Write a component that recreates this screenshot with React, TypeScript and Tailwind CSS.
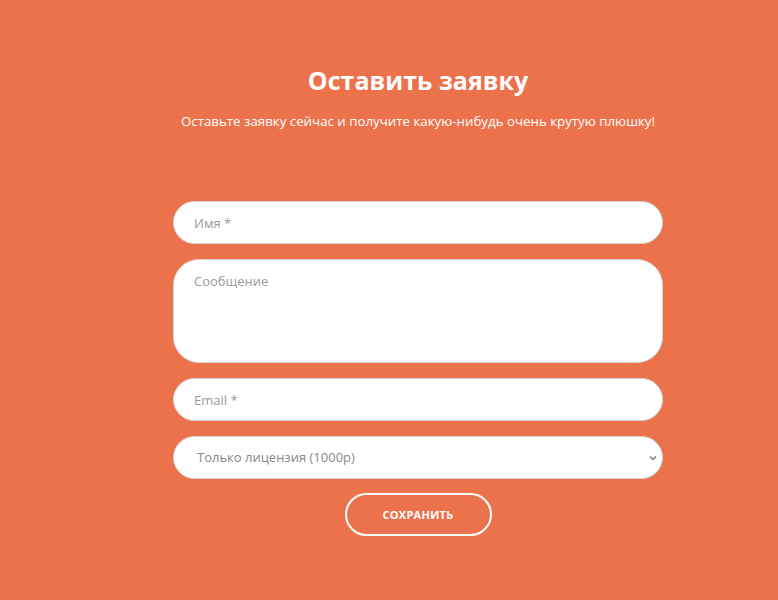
import React from "react";

const App: React.FC = () => {
  return (
    <div
      className="min-h-[600px] w-full bg-[#ec724c] pl-[58px]"
      style={{ fontFamily: '"Open Sans", "Liberation Sans", sans-serif' }}
    >
      <div className="mx-auto flex w-[490px] flex-col items-center pt-[62px]">
        <h2 className="text-[25px] font-bold leading-[36px] text-white">Оставить заявку</h2>
        <p className="mt-[14px] whitespace-nowrap text-[13.3px] leading-[18px] text-white">
          Оставьте заявку сейчас и получите какую-нибудь очень крутую плюшку!
        </p>

        <form className="mt-[71px] flex w-full flex-col gap-[15px]" onSubmit={(e) => e.preventDefault()}>
          <input
            type="text"
            placeholder="Имя *"
            className="h-[43px] w-full rounded-[22px] border border-[#d6d6d6] bg-white px-[20px] text-[13px] text-[#555] outline-none placeholder:text-[#999]"
          />
          <textarea
            placeholder="Сообщение"
            className="h-[104px] w-full resize-none rounded-[26px] border border-[#d6d6d6] bg-white px-[20px] py-[12px] text-[13px] text-[#555] outline-none placeholder:text-[#999]"
          />
          <input
            type="email"
            placeholder="Email *"
            className="h-[43px] w-full rounded-[22px] border border-[#d6d6d6] bg-white px-[20px] text-[13px] text-[#555] outline-none placeholder:text-[#999]"
          />
          <div className="relative">
            <select
              defaultValue="1000"
              className="h-[43px] w-full appearance-none rounded-[22px] border border-[#d6d6d6] bg-white pl-[23px] pr-[30px] text-[13px] text-[#888] outline-none"
            >
              <option value="1000">Только лицензия (1000р)</option>
            </select>
            <svg
              className="pointer-events-none absolute right-[6px] top-1/2 -translate-y-1/2"
              width="8"
              height="6"
              viewBox="0 0 8 6"
              fill="none"
            >
              <path d="M1 1.5 L4 4.5 L7 1.5" stroke="#777" strokeWidth="1.4" />
            </svg>
          </div>
          <div className="-mt-px flex justify-center">
            <button
              type="submit"
              className="h-[43px] w-[147px] rounded-[22px] border-2 border-white pt-px text-[11px] font-bold uppercase tracking-[0.3px] text-white"
            >
              Сохранить
            </button>
          </div>
        </form>
      </div>
    </div>
  );
};

export default App;
